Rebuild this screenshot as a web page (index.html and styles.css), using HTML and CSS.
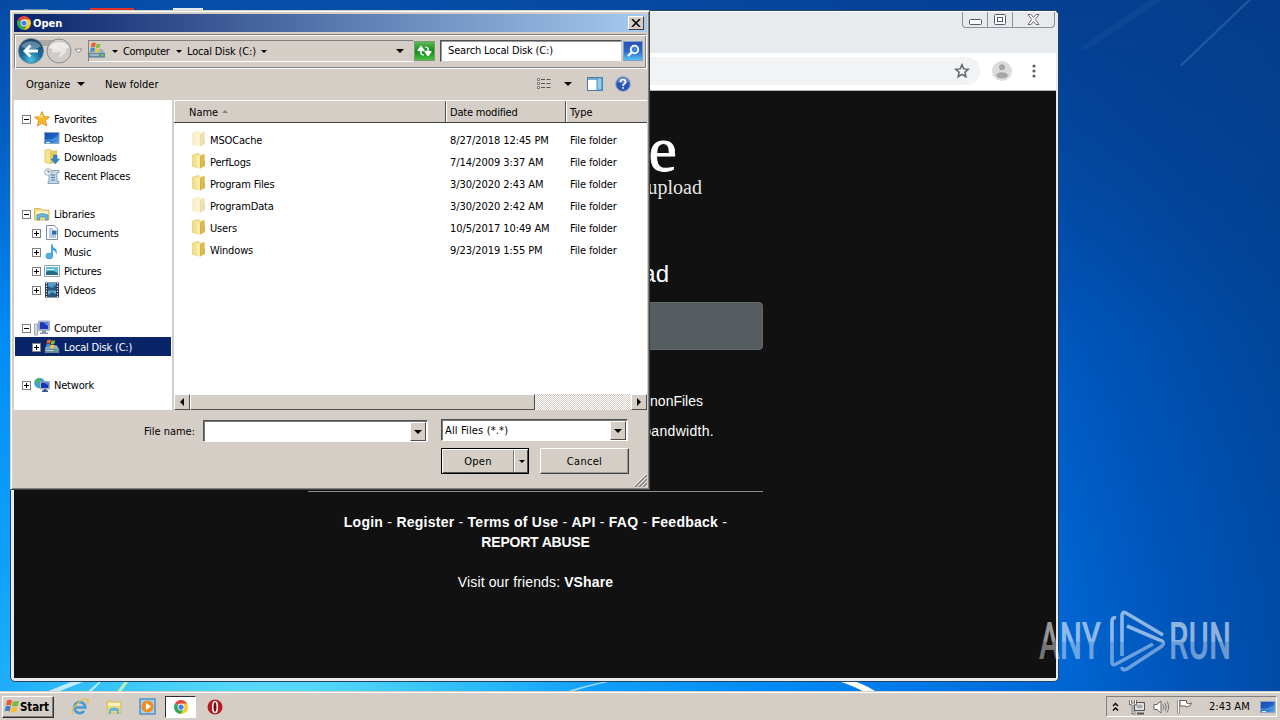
FILE: index.html
```html
<!DOCTYPE html>
<html lang="en">
<head>
  <meta charset="UTF-8" />
  <meta name="viewport" content="width=device-width, initial-scale=1.0"/>
  <title>Open</title>
  <link rel="stylesheet" href="styles.css">
</head>
<body>

  <!-- shared icons -->
  <svg class="defs" width="0" height="0">
    <defs>
      <linearGradient id="gold" x1="0" x2="1"><stop offset="0" stop-color="#f8e89a"/><stop offset=".5" stop-color="#e8c95a"/><stop offset="1" stop-color="#d5a93a"/></linearGradient>
      <linearGradient id="screen" x1="0" y1="0" x2="1" y2="1"><stop offset="0" stop-color="#1c4ea8"/><stop offset=".5" stop-color="#1b5fc4"/><stop offset="1" stop-color="#5fa8e8"/></linearGradient>
      <radialGradient id="blueball" cx=".5" cy=".85" r=".8"><stop offset="0" stop-color="#4ac0e0"/><stop offset=".5" stop-color="#1a6a9c"/><stop offset="1" stop-color="#1b4468"/></radialGradient>
    </defs>
    <symbol id="chrome" viewBox="0 0 16 16">
      <path d="M8 8L1.1 4A8 8 0 0 1 14.9 4z" fill="#e8453c"/>
      <path d="M8 8L1.1 4A8 8 0 0 0 8 16l3.5-6z" fill="#34a652"/>
      <path d="M8 8l3.5 2L8 16A8 8 0 0 0 14.9 4H8z" fill="#fbc916"/>
      <circle cx="8" cy="8" r="3.9" fill="#fff"/>
      <circle cx="8" cy="8" r="3" fill="#4080ee"/>
    </symbol>
    <symbol id="folder" viewBox="0 0 14 16">
      <path d="M.5 2L6 .5h1V15L.5 13.500z" fill="#f3e08c" stroke="#e0c76a" stroke-width=".6"/>
      <path d="M6 2.500L12.500 1v12.500L6 15.500z" fill="url(#gold)"/>
      <path d="M4.500 2.500L8 3.500v12L4.500 14z" fill="#faeda6"/>
      <path d="M8 3.500l1.500-.5v12L8 15.500z" fill="#d8b246"/>
      <path d="M11.300 8l1.700-.5v5l-1.700.5z" fill="#c9b468"/>
    </symbol>
    <symbol id="disk" viewBox="0 0 18 18">
      <path d="M2 9l2-2h10l3 4v4.5H1V11z" fill="#9ab0bc"/>
      <path d="M1 11h16v4.5H1z" fill="#64879b"/>
      <path d="M2 13h9" stroke="#cfe4ee"/>
      <path d="M13 13h2.5" stroke="#6ee05a" stroke-width="1.4"/>
      <path d="M3.5 1.2q2.2-1.4 4.3 0L7 5.3q-2-1-4.2 0z" fill="#e8603a"/>
      <path d="M8.5 1.4q2 1 4 0l-.9 4q-2 1-3.9 0z" fill="#7cc242"/>
      <path d="M2.7 6q2.2-1 4.2 0l-.8 3.7q-2-1-4 0z" fill="#3f8fd8"/>
      <path d="M7.5 6.1q2 1 4 0l-.8 3.8q-2 1-4 0z" fill="#f7c53a"/>
    </symbol>
    <symbol id="desk" viewBox="0 0 16 16">
      <path d="M0 2h15.5v12H0z" fill="#8ba6c4"/>
      <path d="M1 3h13.500v10H1z" fill="url(#screen)"/>
      <path d="M1 9q6 2 13.500-3v2.500q-7 4-13.500 3z" fill="#5fa2e2" opacity=".6"/>
      <path d="M2 12.500h4" stroke="#dff" stroke-width="1"/>
    </symbol>
  </svg>

  <div class="desktop">
    <svg class="wallpaper" width="1280" height="720">
      <path d="M43 693L76 680h12L55 693z" fill="#fff" opacity=".7"/>
      <path d="M86 693l14-12 2 0-12 12z" fill="#fff" opacity=".7"/>
      <path d="M116 693l9-12h4l-9 12z" fill="#d8f8a0" opacity=".8"/>
      <path d="M562 693q20-7 45-12h6q-25 5-45 12z" fill="#fff" opacity=".6"/>
      <path d="M838 681h16q14 5 24 12h-12q-12-7-28-12z" fill="#fff"/>
      <path d="M1180 65L1248 0h3L1182 66z" fill="#6a9ed0" opacity=".28"/>
      <path d="M1080 48l70-48h12l-75 50z" fill="#6a9ed0" opacity=".08"/>
    </svg>
    <div class="shortcut shortcut-bin"></div>
    <div class="shortcut shortcut-red"></div>
    <div class="shortcut shortcut-doc"></div>

    <!-- browser window -->
    <div class="browser">
      <div class="browser-title">
        <div class="caption-buttons">
          <span class="cap-min"><svg width="13" height="6"><rect x=".5" y=".5" width="12" height="5" rx="1" fill="#fff" stroke="#555868"/></svg></span>
          <span class="cap-max"><svg width="12" height="11"><rect x=".5" y=".5" width="11" height="10" rx="1" fill="#fff" stroke="#555868"/><rect x="3.500" y="3.500" width="5" height="4" fill="#fff" stroke="#555868"/></svg></span>
          <span class="cap-close"><svg width="13" height="11" viewBox="0 0 13 11"><path d="M1 .5h3l2.500 3L9 .5h3L8.200 5.500 12 10.500H9L6.500 7.500 4 10.500H1l3.800-5z" fill="#fff" stroke="#66586c" stroke-width=".9"/></svg></span>
        </div>
      </div>
      <div class="browser-bar">
        <div class="omnibox">
          <svg width="16" height="16" viewBox="0 0 16 16"><path d="M8 1.800l1.800 4.100 4.500.4-3.400 3 1 4.400L8 11.400l-3.900 2.300 1-4.400-3.400-3 4.500-.4z" fill="none" stroke="#5f6368" stroke-width="1.500"/></svg>
        </div>
        <svg class="avatar" width="20" height="20"><circle cx="10" cy="10" r="10" fill="#dcdcdc"/><circle cx="10" cy="6.300" r="3" fill="#a5a5a5"/><ellipse cx="10" cy="14.300" rx="5.800" ry="3" fill="#a5a5a5"/></svg>
        <svg class="menu-dots" width="4" height="14"><circle cx="2" cy="2" r="1.600" fill="#5f6368"/><circle cx="2" cy="7" r="1.600" fill="#5f6368"/><circle cx="2" cy="12" r="1.600" fill="#5f6368"/></svg>
      </div>
      <div class="page">
        <div class="logo">e</div>
        <div class="tagline">upload</div>
        <div class="heading">ad</div>
        <div class="upload-btn"></div>
        <div class="blurb blurb-one">nonFiles</div>
        <div class="blurb blurb-two">bandwidth.</div>
        <div class="page-footer">
          <div class="links"><b>Login</b> - <b>Register</b> - <b>Terms of Use</b> - <b>API</b> - <b>FAQ</b> - <b>Feedback</b> -</div>
          <div class="links report"><b>REPORT ABUSE</b></div>
          <div class="friends">Visit our friends: <b>VShare</b></div>
        </div>
      </div>
    </div>

    <!-- open file dialog -->
    <div class="dialog">
      <div class="title-bar">
        <svg width="14" height="14"><use href="#chrome"/></svg>
        <span>Open</span>
        <button class="close-btn"><svg width="10" height="8"><path d="M1 0l8 8M9 0L1 8" stroke="#000" stroke-width="1.600"/></svg></button>
      </div>

      <div class="nav-bar">
        <svg class="nav-arrows" width="72" height="28" viewBox="0 0 72 28">
          <path d="M15 3h30v6H15z" fill="#aaa9a5"/>
          <circle cx="15" cy="14" r="12.500" fill="url(#blueball)" stroke="#6d8796" stroke-width=".8"/>
          <path d="M5 9.500a11 9 0 0 1 20 0q-10 6-20 0z" fill="#fff" opacity=".3"/>
          <path d="M14.500 8.500L9 14l5.500 5.500M9.500 14H22" fill="none" stroke="#fff" stroke-width="2.800"/>
          <circle cx="43" cy="14" r="12" fill="#cfcdc9" stroke="#8b8b8b"/>
          <path d="M33 10.500a11 9 0 0 1 20 0q-10 6-20 0z" fill="#efeeec"/>
          <path d="M43.500 8.500l5.500 5.500-5.500 5.500M48 14H36" fill="none" stroke="#e9e7e5" stroke-width="2.500"/>
          <path d="M59 12h7l-3.500 4z" fill="#fff" stroke="#8a8a90"/>
        </svg>
        <div class="address">
          <svg width="18" height="18"><use href="#disk"/></svg>
          <i class="arrow arrow-first"></i><span class="crumb">Computer</span>
          <i class="arrow"></i><span class="crumb crumb-disk">Local Disk (C:)</span>
          <i class="arrow"></i>
          <i class="arrow arrow-last"></i>
        </div>
        <button class="refresh"><svg width="19" height="18" viewBox="0 0 19 18"><path d="M6 12V7M3 8.500L6 4.500l3 4zM13 6v5M10 9.500l3 4 3-4z" fill="#fff" stroke="#fff" stroke-width="1.300" stroke-linejoin="round"/><path d="M6 11q0 2 3 2M13 7q0-2-3-2" fill="none" stroke="#fff" stroke-width="1.200"/></svg></button>
        <div class="search">Search Local Disk (C:)</div>
        <button class="search-btn"><svg width="18" height="18" viewBox="0 0 18 18"><circle cx="10.500" cy="7.500" r="3.800" fill="#3f86dc" stroke="#fff" stroke-width="1.800"/><path d="M7.500 10.500L4 14" stroke="#fff" stroke-width="2.400"/></svg></button>
      </div>

      <div class="tool-bar">
        <span class="tool-organize">Organize</span><i class="arrow"></i>
        <span class="tool-new">New folder</span>
        <svg class="tool-view" width="15" height="12"><path d="M1.500.5h2v2h-2zM1.500 4.500h2v2h-2zM1.500 8.500h2v2h-2z" fill="#fff" stroke="#777" /><path d="M5 1.500h4M10.500 1.500h4M5 5.500h4M10.500 5.500h4M5 9.500h4M10.500 9.500h4" stroke="#555"/></svg>
        <i class="arrow"></i>
        <svg class="tool-pane" width="16" height="14"><rect x=".5" y=".5" width="15" height="13" fill="#fff" stroke="#4a7ba6"/><path d="M1 2h9" stroke="#80a8cc" stroke-width="2"/><rect x="10" y="1" width="5" height="12" fill="#8ccdec" stroke="#4a8cb8"/></svg>
        <svg class="tool-help" width="16" height="16"><circle cx="8" cy="8" r="7.300" fill="#2b55b4" stroke="#8ba0d4"/><path d="M2 6a6 5 0 0 1 12 0q-6 3-12 0z" fill="#7f9ee0" opacity=".6"/><path d="M5.500 6q0-2.500 2.500-2.500T10.500 6q0 1.200-1.300 2Q8 8.700 8 10M8 11.200v1.600" fill="none" stroke="#fff" stroke-width="1.700"/></svg>
      </div>

      <div class="panes">
        <div class="tree">
          <div class="node"><i class="box"></i><svg width="16" height="16" viewBox="0 0 16 16"><path d="M8 .5l2.200 5 5.300.5-4 3.600 1.200 5.500L8 12.300l-4.700 2.800 1.200-5.500L.5 6l5.300-.5z" fill="#fbb62c" stroke="#d88a2a" stroke-width=".8"/><path d="M8 3l1 4-5-.5z" fill="#ffe37a"/></svg><span>Favorites</span></div>
          <div class="node leaf"><svg width="16" height="16"><use href="#desk"/></svg><span>Desktop</span></div>
          <div class="node leaf"><svg width="16" height="16" viewBox="0 0 16 16"><path d="M1 1l6-.5v14L1 13.500z" fill="#f6e38e" stroke="#d8bb55" stroke-width=".7"/><path d="M6 2l7-1v12l-7 2z" fill="#e9ca62"/><path d="M9.500 6h3.500v4h2.500l-4.200 5L7 10h2.500z" fill="#2d8ad0" stroke="#1668a8" stroke-width=".5"/></svg><span>Downloads</span></div>
          <div class="node leaf"><svg width="16" height="16" viewBox="0 0 16 16"><path d="M5 2.500h10v2h-2v9h2v2H4v-2h1z" fill="#c5d9e8" stroke="#7596b0" stroke-width=".8"/><path d="M7 7h4M7 9.500h4M7 12h4" stroke="#527c9c"/><circle cx="4" cy="4" r="3.400" fill="#edf3f7" stroke="#91a8b8" stroke-width=".8"/><path d="M4 2v2h2" fill="none" stroke="#555" stroke-width=".8"/></svg><span>Recent Places</span></div>
          <div class="node gap"></div>
          <div class="node"><i class="box"></i><svg width="16" height="16" viewBox="0 0 16 16"><path d="M.5 2.500h6l1 1.500h7.500v10H.5z" fill="#f2db82" stroke="#cfae50" stroke-width=".8"/><path d="M2 5h12v3H2z" fill="#fbf3c4"/><path d="M3 14V9q5-3 11 0v5h-2.500v-3h-6v3z" fill="#6cbbe0" stroke="#3f8ab8" stroke-width=".7"/></svg><span>Libraries</span></div>
          <div class="node child"><i class="box plus"></i><svg width="16" height="16" viewBox="0 0 16 16"><path d="M2.500.5h8L13.500 4v10.500h-11z" fill="#fff" stroke="#7790a8"/><path d="M5 4h4M5 6h2.500M5 8h2.500M5 10h7M5 12h7" stroke="#6e98bc"/><path d="M8 5.500h4.500v4H8z" fill="#2a6cac"/></svg><span>Documents</span></div>
          <div class="node child"><i class="box plus"></i><svg width="16" height="16" viewBox="0 0 16 16"><path d="M8 .5v11.300" stroke="#2f91d2" stroke-width="1.600"/><path d="M8 .5q.5 3 3.500 4.500 2.500 2 .5 5.500.2-3.500-4-5z" fill="#3aa0dc"/><ellipse cx="5.300" cy="12" rx="3.500" ry="2.900" fill="#51b2e8" stroke="#2b86c4" stroke-width=".6"/></svg><span>Music</span></div>
          <div class="node child"><i class="box plus"></i><svg width="16" height="16" viewBox="0 0 16 16"><path d="M.5 2.500h15v11H.5z" fill="#fff" stroke="#8e9ca8"/><path d="M2 4h12v8H2z" fill="#59bfdc"/><path d="M2 9q5-3 12 1v2H2z" fill="#236c82"/><path d="M3 6.500h7" stroke="#dff5fa"/></svg><span>Pictures</span></div>
          <div class="node child"><i class="box plus"></i><svg width="16" height="16" viewBox="0 0 16 16"><path d="M1 .5h14v15H1z" fill="#27394c"/><path d="M4 1h8v6.500H4z" fill="#4c9ad0"/><path d="M4 8.500h8V15H4z" fill="#5faed8"/><path d="M4 4l4 2 4-3v4.500H4zM4 13l4-3 4 2v3H4z" fill="#27577e"/><path d="M2.500 1v14M13.500 1v14" stroke="#e6edf2" stroke-width="1.200" stroke-dasharray="1.300 1.300"/></svg><span>Videos</span></div>
          <div class="node gap"></div>
          <div class="node"><i class="box"></i><svg width="16" height="16" viewBox="0 0 16 16"><path d="M.5 4h3v11h-3z" fill="#d4dade" stroke="#85909a" stroke-width=".7"/><path d="M4.500 1h11v9.500h-11z" fill="#c7d0dc" stroke="#7d8ca0" stroke-width=".7"/><path d="M5.700 2.200h8.600v7H5.700z" fill="#1c38b8"/><path d="M9 2.200h5.300v4z" fill="#6688e0"/><path d="M8 11h4v1.500h2V14H6v-1.500h2z" fill="#8a98ac"/></svg><span>Computer</span></div>
          <div class="node child selected"><i class="box plus"></i><svg width="16" height="16"><use href="#disk"/></svg><span>Local Disk (C:)</span></div>
          <div class="node gap"></div>
          <div class="node"><i class="box plus"></i><svg width="16" height="16" viewBox="0 0 16 16"><circle cx="5.500" cy="6" r="5.300" fill="#35a3d8"/><path d="M2 3q3-3 5-1.500L5 5 2 7zM4 8l3 0 0 3-2 0z" fill="#4db848"/><path d="M6 4.500h9.500V12H6z" fill="#c4cfe0" stroke="#7989a8" stroke-width=".6"/><path d="M7 5.500h7.500V11H7z" fill="#1736b4"/><path d="M10 5.500h4.500v3z" fill="#5c80dc"/><path d="M9.500 12h3v1.500H14v1.500H8v-1.500h1.500z" fill="#3a5890"/></svg><span>Network</span></div>
        </div>

        <div class="list">
          <div class="list-head">
            <div class="col-name">Name<i class="sort"></i></div>
            <div class="col-date">Date modified</div>
            <div class="col-type">Type</div>
          </div>
          <div class="rows">
            <div class="row hidden-dir"><svg width="14" height="16"><use href="#folder"/></svg><span class="name">MSOCache</span><span class="date">8/27/2018 12:45 PM</span><span>File folder</span></div>
            <div class="row"><svg width="14" height="16"><use href="#folder"/></svg><span class="name">PerfLogs</span><span class="date">7/14/2009 3:37 AM</span><span>File folder</span></div>
            <div class="row"><svg width="14" height="16"><use href="#folder"/></svg><span class="name">Program Files</span><span class="date">3/30/2020 2:43 AM</span><span>File folder</span></div>
            <div class="row hidden-dir"><svg width="14" height="16"><use href="#folder"/></svg><span class="name">ProgramData</span><span class="date">3/30/2020 2:42 AM</span><span>File folder</span></div>
            <div class="row"><svg width="14" height="16"><use href="#folder"/></svg><span class="name">Users</span><span class="date">10/5/2017 10:49 AM</span><span>File folder</span></div>
            <div class="row"><svg width="14" height="16"><use href="#folder"/></svg><span class="name">Windows</span><span class="date">9/23/2019 1:55 PM</span><span>File folder</span></div>
          </div>
          <div class="scroll">
            <div class="scroll-btn"><i class="tri-left"></i></div>
            <div class="thumb"></div>
            <div class="track"></div>
            <div class="scroll-btn"><i class="tri-right"></i></div>
          </div>
        </div>
      </div>

      <div class="dialog-footer">
        <div class="field-row">
          <label>File name:</label>
          <div class="combo combo-name"><span></span><button><i class="arrow"></i></button></div>
          <div class="combo combo-type"><span>All Files (*.*)</span><button><i class="arrow"></i></button></div>
        </div>
        <div class="button-row">
          <div class="open-btn"><span>Open</span><b><i class="arrow"></i></b></div>
          <div class="cancel-btn">Cancel</div>
        </div>
      </div>
      <svg class="grip" width="13" height="13"><path d="M1 13L13 1M5 13l8-8M9 13l4-4" stroke="#808080" stroke-width="1.500"/><path d="M0 12L12 0M4 12l8-8M8 12l4-4" stroke="#fff" stroke-width=".8"/></svg>
    </div>

    <!-- watermark -->
    <svg class="watermark" width="210" height="64" viewBox="0 0 210 64">
      <defs><linearGradient id="wm" gradientUnits="userSpaceOnUse" x1="0" y1="0" x2="0" y2="64"><stop offset=".5" stop-color="#fff" stop-opacity=".56"/><stop offset=".52" stop-color="#fff" stop-opacity=".42"/></linearGradient></defs>
      <text x="1" y="50" textLength="62" lengthAdjust="spacingAndGlyphs" fill="url(#wm)">ANY</text>
      <text x="131" y="50" textLength="62" lengthAdjust="spacingAndGlyphs" fill="url(#wm)">RUN</text>
      <path d="M78 9q-4-1-4 3v41q0 4 4 2l37-20M84 47V7q0-5 4-3l37 22M89 17l35 15q3 2 0 5L89 60q-5 2-5-2" fill="none" stroke="url(#wm)" stroke-width="3.600"/>
    </svg>

    <!-- taskbar -->
    <div class="taskbar">
      <div class="start">
        <svg width="16" height="15" viewBox="0 0 16 15"><path d="M3 1.500q2.500-1.500 5 0L7 6.500q-2.500-1.300-5 0z" fill="#e8582c"/><path d="M9 2q3 1.300 6-.2l-1.200 5q-3 1.400-5.800 0z" fill="#78bb3c"/><path d="M1.700 7.500q2.500-1.300 5 0l-1.200 5q-2.300-1.300-5 0z" fill="#3f7cc8"/><path d="M7.700 7.800q3 1.300 5.800 0l-1.200 5q-3 1.300-5.800 0z" fill="#f8bd30"/></svg>
        <span>Start</span>
      </div>
      <div class="quick">
        <svg width="18" height="18" viewBox="0 0 18 18"><path d="M4.500 9.500h9.800a5.500 5.500 0 1 0-1.200 3.500" fill="none" stroke="#3f9bdc" stroke-width="2.700"/><path d="M2 16Q-1 13 6 6T17 2q1 1-1 4" fill="none" stroke="#e9bd3c" stroke-width="1.400"/></svg>
        <svg width="18" height="18" viewBox="0 0 18 18"><path d="M2 3h5l1 1h8v11H2z" fill="#efd77c" stroke="#d6b650" stroke-width=".7"/><path d="M3 5h12v3H3z" fill="#faf1bc"/><path d="M4 16v-5q5-3 10 0v5h-2v-3H6v3z" fill="#64b4e0"/></svg>
        <svg width="18" height="18" viewBox="0 0 18 18"><rect x="1" y="1" width="15" height="15" fill="#aad0ec" stroke="#528fc4" stroke-width="1.500"/><circle cx="8.500" cy="8.500" r="6" fill="#f08c24"/><path d="M7 5l5 3.500L7 12z" fill="#fff"/></svg>
      </div>
      <div class="task-active"><svg width="14" height="14"><use href="#chrome"/></svg></div>
      <svg class="opera" width="16" height="16"><circle cx="8" cy="8" r="7.500" fill="#b81820"/><ellipse cx="8" cy="8" rx="2.300" ry="5.500" fill="#7c0b12" stroke="#fff" stroke-width="1.600"/></svg>
      <div class="tray">
        <svg width="7" height="10"><path d="M1 4l2.500-2.500L6 4M1 8.500L3.500 6 6 8.500" fill="none" stroke="#000" stroke-width="1.400"/></svg>
        <svg class="tray-net" width="17" height="16" viewBox="0 0 17 16"><path d="M5.500 3.500h10v8h-10z" fill="#c8c8c8" stroke="#555"/><path d="M7 5h7v5H7z" fill="#aaa" stroke="#fff"/><path d="M8 14.500h7" stroke="#555" stroke-width="2"/><path d="M1.500 1v4h5V1M4 5v9h3" fill="none" stroke="#555" stroke-width="2.500"/><path d="M1.500 1v4h5V1M4 5v9h3" fill="none" stroke="#fff" stroke-width="1"/></svg>
        <svg class="tray-vol" width="17" height="14" viewBox="0 0 17 14"><path d="M1 4.500h3L8 1v12L4 9.500H1z" fill="#fff" stroke="#666"/><path d="M10 4.500q1.700 2.500 0 5M12 3q2.700 4 0 8M14 1.500q3.500 5.500 0 11" fill="none" stroke="#777"/></svg>
        <svg class="tray-flag" width="16" height="15" viewBox="0 0 16 15"><path d="M1.500 1v13.500" stroke="#666" stroke-width="2.200"/><path d="M3 1.500h6.500v2.500q2 1.500 5 0-1 4-5.500 4l-.5-1H3z" fill="#fff" stroke="#666"/><path d="M1.500 1v13" stroke="#fff"/></svg>
        <span class="clock">2:43 AM</span>
        <svg width="16" height="16"><use href="#desk"/></svg>
      </div>
    </div>
  </div>

</body>
</html>
```
FILE: styles.css
```css
* {
  box-sizing: border-box;
}

body {
  margin: 0;
  font-family: "DejaVu Sans Condensed", "DejaVu Sans", sans-serif;
  font-stretch: condensed;
  font-size: 11px;
  color: #000;
}

svg {
  display: block;
  flex: none;
}

button {
  padding: 0;
  font: inherit;
}

.defs {
  position: absolute;
}

.desktop {
  position: relative;
  width: 1280px;
  height: 720px;
  overflow: hidden;
  background:
    linear-gradient(rgba(8, 60, 140, .65), rgba(0, 60, 160, 0) 330px),
    radial-gradient(circle at 270px 760px, #6ee6f8 0, #3cc8f8 160px, #10a0fc 330px, #0088f4 530px, #006cdc 760px, #0054b8 920px, #00469c 1080px, #003f88 1250px);
}

.wallpaper {
  position: absolute;
  top: 0;
  left: 0;
}

.shortcut {
  position: absolute;
  top: 8px;
  height: 3px;
}

.shortcut-bin {
  top: 9px;
  left: 24px;
  width: 24px;
  background: #7d92ac;
}

.shortcut-red {
  left: 90px;
  width: 44px;
  background: #e2302c;
}

.shortcut-doc {
  left: 173px;
  width: 30px;
  background: #e4e8f0;
}

/* browser window */

.browser {
  position: absolute;
  left: 10px;
  top: 10px;
  width: 1049px;
  height: 672px;
  display: flex;
  flex-direction: column;
  padding: 0 2px 3px 3px;
  border: 1px solid #27435f;
  border-radius: 5px;
  background: #e7ebee;
}

.browser-title {
  height: 42px;
  display: flex;
  justify-content: flex-end;
  padding-right: 1px;
  border-top: 1px solid #fff;
}

.caption-buttons {
  display: flex;
  height: 16px;
  border: 1px solid #8a929a;
  border-top: none;
  border-radius: 0 0 4px 4px;
}

.caption-buttons span {
  display: flex;
  align-items: center;
  justify-content: center;
  width: 25px;
  border-right: 1px solid #8a929a;
}

.caption-buttons .cap-min {
  padding-top: 4px;
}

.caption-buttons .cap-close {
  width: 41px;
  border-right: none;
}

.browser-bar {
  height: 38px;
  display: flex;
  align-items: center;
  padding-bottom: 1px;
  background: #fff;
  border-bottom: 1px solid #b8b8b8;
}

.omnibox {
  width: 966px;
  height: 28px;
  display: flex;
  align-items: center;
  justify-content: flex-end;
  padding-right: 10px;
  border-radius: 14px;
  background: #f1f3f4;
}

.avatar {
  margin-left: 12px;
}

.menu-dots {
  margin-left: 20px;
}

.page {
  flex: 1;
  padding: 41px 293px 0 294px;
  background: #111;
  color: #fff;
  font-family: "Liberation Sans", sans-serif;
  font-stretch: normal;
  font-size: 14px;
  line-height: 20px;
}

.logo,
.tagline {
  font-family: "Liberation Serif", serif;
  text-align: right;
}

.logo {
  height: 44px;
  padding-right: 86px;
  font-size: 64px;
  line-height: 35px;
  -webkit-text-stroke: .8px #fff;
}

.tagline {
  height: 22px;
  padding-right: 61px;
  font-size: 20px;
  line-height: 22px;
  color: #e6e6e6;
}

.heading {
  margin-top: 61px;
  padding-right: 94px;
  text-align: right;
  font-size: 24px;
  line-height: 29px;
}

.upload-btn {
  height: 48px;
  margin-top: 14px;
  border: 1px solid #62696d;
  border-radius: 4px;
  background: #555d61;
}

.blurb {
  text-align: right;
  line-height: 30px;
}

.blurb-one {
  margin-top: 36px;
  padding-right: 60px;
}

.blurb-two {
  padding-right: 49px;
  letter-spacing: .3px;
}

.page-footer {
  margin-top: 45px;
  padding-top: 20px;
  border-top: 1px solid #8c8c8c;
  text-align: center;
}

.links {
  letter-spacing: .25px;
  white-space: nowrap;
}

.report {
  letter-spacing: -.2px;
}

.friends {
  margin-top: 20px;
  letter-spacing: .12px;
}

/* open dialog */

.dialog {
  position: absolute;
  left: 10px;
  top: 10px;
  width: 640px;
  height: 480px;
  display: flex;
  flex-direction: column;
  padding: 2px 1px 1px 2px;
  border: 1px solid;
  border-color: #d4d0c8 #404040 #404040 #d4d0c8;
  box-shadow: inset 1px 1px #fff, inset -1px -1px #808080;
  background: #d5cec7;
}

.title-bar {
  height: 18px;
  margin: 1px;
  display: flex;
  align-items: center;
  padding: 0 3px 0 3px;
  background: linear-gradient(90deg, #0a246a, #a6caf0);
  color: #fff;
  font-weight: bold;
}

.title-bar span {
  flex: 1;
  margin-left: 2px;
}

.close-btn {
  width: 16px;
  height: 14px;
  display: flex;
  align-items: center;
  justify-content: center;
  background: #d5cec7;
  border: 1px solid;
  border-color: #fff #404040 #404040 #fff;
}

.nav-bar {
  height: 35px;
  margin: 1px 1px 0;
  display: flex;
  align-items: center;
  padding-bottom: 1px;
  border: 1px solid;
  border-color: #808080 #fff #fff #808080;
  box-shadow: inset 1px 1px #fff, inset -1px -1px #808080;
}

.nav-arrows {
  margin-left: 1px;
}

.address {
  width: 326px;
  height: 22px;
  display: flex;
  align-items: center;
  border: 1px solid;
  border-color: #808080 transparent #fff #808080;
}

.address > svg {
  margin-left: -1px;
}

.arrow {
  flex: none;
  width: 0;
  height: 0;
  border: 3px solid transparent;
  border-top: 3px solid #000;
  border-bottom: none;
}

.arrow-first {
  margin-left: 6px;
}

.crumb {
  width: 48px;
  margin: 0 5px 0 5px;
  white-space: nowrap;
  letter-spacing: -.35px;
}

.crumb-disk {
  width: 69px;
  letter-spacing: -.15px;
}

.arrow-last {
  margin-left: auto;
  margin-right: 9px;
  border-width: 4px 4px 0;
}

.refresh {
  width: 21px;
  height: 20px;
  border: 1px solid #7d9a72;
  background: linear-gradient(#5cba52, #128a1c 50%, #46c040);
}

.search {
  width: 182px;
  height: 22px;
  margin-left: 5px;
  padding-left: 7px;
  line-height: 20px;
  background: #fff;
  border: 1px solid;
  border-color: #505050 #d5cec7 #d5cec7 #505050;
  box-shadow: inset 1px 1px #999;
  letter-spacing: -.15px;
}

.search-btn {
  width: 20px;
  height: 20px;
  margin-left: 1px;
  border: 1px solid #7da2cc;
  background: linear-gradient(#2c50b8, #2a68cc 50%, #54c0f0);
}

.tool-bar {
  height: 31px;
  display: flex;
  align-items: center;
  padding: 0 17px 1px 13px;
}

.tool-bar .arrow {
  border-width: 4px 4px 0;
}

.tool-organize {
  width: 51px;
}

.tool-new {
  margin-left: 20px;
}

.tool-view {
  margin-left: auto;
  margin-right: 13px;
}

.tool-pane {
  margin-left: 15px;
}

.tool-help {
  margin-left: 12px;
}

.panes {
  display: flex;
  height: 310px;
  margin: 0 1px;
}

.tree {
  width: 158px;
  padding: 9px 1px 0;
  background: #fff;
}

.node {
  height: 19px;
  display: flex;
  align-items: center;
  padding-left: 7px;
  white-space: nowrap;
  letter-spacing: -.2px;
}

.node span {
  padding-top: 1px;
}

.node svg {
  margin: 0 4px 0 3px;
}

.leaf {
  padding-left: 26px;
}

.child {
  padding-left: 17px;
}

.selected {
  background: #0a246a;
  color: #fff;
}

.box {
  flex: none;
  width: 9px;
  height: 9px;
  margin-top: 1px;
  border: 1px solid #808080;
  background: linear-gradient(#000, #000) center / 5px 1px no-repeat #fff;
}

.plus {
  background: linear-gradient(#000, #000) center / 5px 1px no-repeat, linear-gradient(#000, #000) center / 1px 5px no-repeat #fff;
}

.list {
  flex: 1;
  margin-left: 2px;
  display: flex;
  flex-direction: column;
  background: #fff;
}

.list-head {
  height: 23px;
  display: flex;
  line-height: 23px;
  background: #d5cec7;
  border-top: 1px solid #fff;
  border-bottom: 1px solid #404040;
}

.list-head div {
  height: 21px;
  border-left: 1px solid #fff;
  border-right: 1px solid #505050;
}

.list-head .col-name {
  width: 272px;
  display: flex;
  padding-left: 14px;
}

.sort {
  width: 0;
  height: 0;
  margin: 9px 0 0 4px;
  border: 3px solid transparent;
  border-top: none;
  border-bottom: 3px solid #858585;
}

.list-head .col-date {
  width: 120px;
  padding-left: 3px;
  letter-spacing: -.2px;
}

.list-head .col-type {
  flex: 1;
  padding-left: 3px;
  border-right: none;
}

.rows {
  flex: 1;
  padding-top: 6px;
}

.row {
  height: 22px;
  display: flex;
  align-items: center;
  padding-left: 18px;
  letter-spacing: -.15px;
}

.row svg {
  margin-top: -2px;
}

.row .name {
  width: 240px;
  margin-left: 4px;
}

.row .date {
  width: 120px;
  letter-spacing: -.07px;
}

.hidden-dir svg {
  opacity: .45;
}

.scroll {
  height: 16px;
  display: flex;
}

.scroll-btn,
.thumb,
.combo button {
  background: #d5cec7;
  border: 1px solid;
  border-color: #fff #505050 #505050 #fff;
}

.scroll-btn {
  width: 16px;
  display: flex;
  align-items: center;
  justify-content: center;
}

.thumb {
  width: 345px;
}

.track {
  flex: 1;
  background: repeating-conic-gradient(#fff 0 25%, #d5cec7 0 50%) 0 0 / 2px 2px;
}

.tri-left,
.tri-right {
  border: 4px solid transparent;
  border-left-width: 0;
  border-right: 4px solid #000;
}

.tri-right {
  border-right: none;
  border-left: 4px solid #000;
}

.dialog-footer {
  padding: 9px 19px 0 131px;
}

.field-row {
  display: flex;
}

.field-row label {
  width: 59px;
  padding-top: 6px;
  white-space: nowrap;
}

.combo {
  height: 22px;
  display: flex;
  background: #fff;
  border: 1px solid;
  border-color: #505050 #fff #fff #505050;
  box-shadow: inset 1px 1px #777;
}

.combo span {
  flex: 1;
  padding-left: 3px;
  line-height: 22px;
  letter-spacing: .15px;
}

.combo button {
  width: 16px;
  display: flex;
  align-items: center;
  justify-content: center;
  margin: 1px 1px 0 0;
}

.combo .arrow {
  border-width: 4px 4px 0;
}

.combo-name {
  width: 225px;
  margin-top: 1px;
}

.combo-type {
  width: 187px;
  margin-left: 13px;
}

.button-row {
  display: flex;
  justify-content: flex-end;
  margin-top: 6px;
}

.open-btn,
.cancel-btn {
  height: 26px;
  line-height: 25px;
  border: 1px solid;
  letter-spacing: .3px;
}

.open-btn {
  width: 88px;
  display: flex;
  border-color: #000;
  box-shadow: inset 1px 1px #fff, inset -1px -1px #505050;
}

.open-btn span {
  flex: 1;
  text-align: center;
}

.open-btn b {
  width: 14px;
  display: flex;
  align-items: center;
  justify-content: center;
  margin: 1px 0;
  border-left: 1px solid #fff;
  box-shadow: -1px 0 #808080;
}

.cancel-btn {
  width: 89px;
  margin-left: 11px;
  text-align: center;
  border-color: #fff #404040 #404040 #fff;
  box-shadow: inset -1px -1px #999;
}

.grip {
  position: absolute;
  right: 2px;
  bottom: 2px;
}

/* watermark */

.watermark {
  position: absolute;
  left: 1038px;
  top: 609px;
  font-family: Roboto, sans-serif;
  font-stretch: normal;
  font-size: 52px;
  font-weight: 500;
}

/* taskbar */

.taskbar {
  position: absolute;
  left: 0;
  right: 0;
  bottom: 0;
  height: 28px;
  display: flex;
  align-items: center;
  padding: 0 3px 0 2px;
  background: #d5cec7;
  border-top: 1px solid #fff;
  box-shadow: 0 -1px #d5cec7;
}

.start {
  width: 52px;
  height: 22px;
  display: flex;
  align-items: center;
  padding-left: 1px;
  border: 1px solid;
  border-color: #fff #303030 #303030 #fff;
  box-shadow: inset -1px -1px #808080;
  font-size: 11.500px;
  font-weight: bold;
}

.start span {
  letter-spacing: -.1px;
}

.quick {
  display: flex;
  gap: 16px;
  margin-left: 17px;
}

.task-active {
  width: 31px;
  height: 22px;
  display: flex;
  align-items: center;
  justify-content: center;
  margin-left: 8px;
  background: #fff;
  border: 1px solid;
  border-color: #303030 #fff #fff #303030;
}

.opera {
  margin-left: 11px;
}

.tray {
  width: 171px;
  height: 21px;
  display: flex;
  align-items: center;
  margin-left: auto;
  padding-left: 5px;
  border: 1px solid;
  border-color: #808080 #fff #fff #808080;
}

.tray-net {
  margin-left: 10px;
}

.tray-vol {
  margin-left: 7px;
}

.tray-flag {
  margin-left: 7px;
}

.clock {
  width: 42px;
  margin: 0 9px 0 16px;
  white-space: nowrap;
  letter-spacing: 0;
}
```
